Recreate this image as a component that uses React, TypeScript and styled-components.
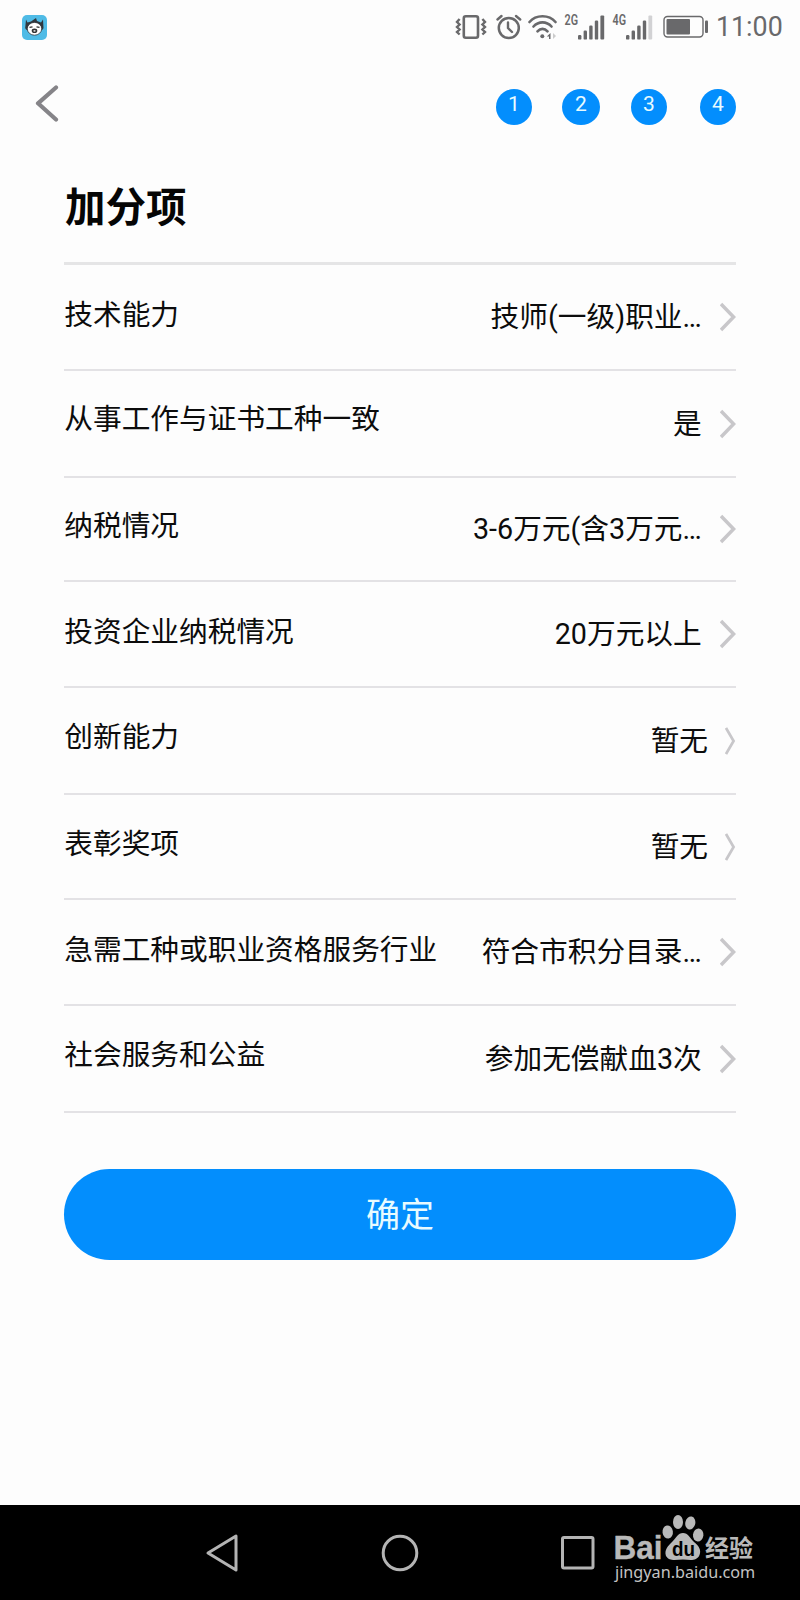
import React from 'react';
import styled, { createGlobalStyle } from 'styled-components';

const GlobalStyle = createGlobalStyle`
  * { box-sizing: border-box; }
  body {
    margin: 0;
    background: #fdfdfd;
    color: #0c0c0c;
    font-family: Roboto, 'Noto Sans CJK SC', sans-serif;
  }
`;

const Screen = styled.div`
  width: 800px;
  height: 1600px;
  display: flex;
  flex-direction: column;
  overflow: hidden;
`;

const StatusBar = styled.header`
  height: 54px;
  flex: none;
  display: flex;
  align-items: center;
  justify-content: space-between;
  padding: 0 18px 0 22px;
  color: #69696b;
`;

const StatusIcons = styled.div`
  display: flex;
  align-items: center;
`;

const Glyph = styled.svg<{ $gap?: number }>`
  display: block;
  flex: none;
  margin-right: ${(p) => p.$gap ?? 0}px;
`;

const Clock = styled.span`
  font-size: 26.8px;
  line-height: 32px;
  width: 66px;
  white-space: nowrap;
`;

const NavRow = styled.div`
  height: 106px;
  flex: none;
  display: flex;
  justify-content: space-between;
  padding: 31px 64px 0 35px;
`;

const Steps = styled.div`
  display: flex;
  padding-top: 4px;
`;

const Step = styled.span<{ $width: number; $gap: number }>`
  width: ${(p) => p.$width}px;
  height: 36px;
  margin-right: ${(p) => p.$gap}px;
  border-radius: 50%;
  background: #038efd;
  color: #e8fbff;
  font-size: 21px;
  line-height: 31px;
  text-align: center;
`;

const Content = styled.main`
  flex: 1;
  padding: 0 64px;
`;

const Title = styled.h1`
  margin: 0;
  height: 102px;
  padding: 19px 0 0 1px;
  font-size: 40.5px;
  line-height: 58px;
  font-weight: 700;
  color: #050505;
`;

const List = styled.ul`
  list-style: none;
  margin: 0;
  padding: 0;
  border-top: 3px solid #e5e5e6;
`;

const Row = styled.li<{ $height: number }>`
  height: ${(p) => p.$height}px;
  border-bottom: 2px solid #e3e2e5;
  display: flex;
  align-items: center;
  font-size: 28.7px;
  line-height: 42px;
  white-space: nowrap;
`;

const Label = styled.span<{ $lift: number }>`
  flex: 1;
  padding: 0 0 ${(p) => p.$lift}px 0.3px;
`;

const Value = styled.span<{ $gap: number }>`
  margin-right: ${(p) => p.$gap}px;
`;

const Confirm = styled.button`
  display: block;
  width: 672px;
  height: 91px;
  margin: 56px 0 0;
  padding: 1px 0 0;
  border: 0;
  border-radius: 46px;
  background: #038efd;
  color: #e8fbff;
  font: 400 34px/50px Roboto, 'Noto Sans CJK SC', sans-serif;
`;

const SystemBar = styled.footer`
  position: relative;
  height: 95px;
  flex: none;
  background: #000;
  display: flex;
  align-items: center;
  padding-left: 205px;
`;

const Watermark = styled.div`
  position: absolute;
  left: 610px;
  top: 6px;
  width: 150px;
  color: #b9b9b9;
`;

const Site = styled.div`
  font: 400 16.2px/20px 'Noto Sans', sans-serif;
  color: #c4c4c4;
  padding-left: 5px;
  margin-top: -9px;
  white-space: nowrap;
`;

const steps = [
  { n: 1, width: 36, gap: 30 },
  { n: 2, width: 38, gap: 31 },
  { n: 3, width: 36, gap: 33 },
  { n: 4, width: 36, gap: 0 },
];

const rows = [
  { label: '技术能力', value: '技师(一级)职业…', height: 106, lift: 5 },
  { label: '从事工作与证书工种一致', value: '是', height: 107, lift: 9 },
  { label: '纳税情况', value: '3-6万元(含3万元…', height: 104, lift: 7 },
  { label: '投资企业纳税情况', value: '20万元以上', height: 106, lift: 4 },
  { label: '创新能力', value: '暂无', height: 107, lift: 7, narrow: true },
  { label: '表彰奖项', value: '暂无', height: 105, lift: 6, narrow: true },
  { label: '急需工种或职业资格服务行业', value: '符合市积分目录…', height: 106, lift: 5 },
  { label: '社会服务和公益', value: '参加无偿献血3次', height: 107, lift: 7 },
];

const AppBadge = () => (
  <Glyph width="25" height="25" viewBox="0 0 25 25">
    <rect width="25" height="25" rx="5" fill="#4fbbe6" />
    <path d="M4 4.5 L5.5 7.5 L9 6.5 L14 3 L15 6 L19 7.5 L21 4.5 L21.5 13 C20 18 5 18 3.2 13Z" fill="#30373d" />
    <ellipse cx="12.5" cy="13.8" rx="7.2" ry="6.4" fill="#fff" stroke="#30373d" strokeWidth=".8" />
    <path d="M7.5 12.4 L10.5 11.8 M14.5 11.8 L17.5 12.4" stroke="#333" strokeWidth="1.2" />
    <ellipse cx="12.5" cy="15.7" rx="2.8" ry="2.3" fill="#333" />
    <ellipse cx="12.5" cy="15.9" rx="1.2" ry=".8" fill="#ddd" />
  </Glyph>
);

const Vibrate = () => (
  <Glyph width="32" height="26" viewBox="0 0 32 26" $gap={9} fill="none" stroke="currentColor">
    <rect x="8.8" y="2.3" width="14.2" height="21.4" rx="2" strokeWidth="2.6" />
    <path d="M4.6 5 L2 8 L4.6 10.5 L2 13 L4.6 15.5 L2 18 L4.6 20.5 M27.4 5 L30 8 L27.4 10.5 L30 13 L27.4 15.5 L30 18 L27.4 20.5" strokeWidth="2.4" />
  </Glyph>
);

const Alarm = () => (
  <Glyph width="26" height="26" viewBox="0 0 26 26" $gap={6} fill="none" stroke="currentColor" strokeLinecap="round">
    <circle cx="12.8" cy="14" r="10" strokeWidth="2.5" />
    <path d="M12 8.5 V14 L16 18" strokeWidth="2.4" />
    <path d="M1.5 5.5 L5.5 2 M20 2 L24.2 5.5" strokeWidth="2.4" />
  </Glyph>
);

const Wifi = () => (
  <Glyph width="30" height="26" viewBox="0 0 30 26" $gap={6} fill="none" stroke="currentColor" strokeWidth="2.6" strokeLinecap="round">
    <path d="M1.5 8 C8 .4 21 .4 27.5 8 M5.5 12.5 C10.5 7 18.5 7 23.5 12.5 M9.5 17.3 C12.5 14 16.5 14 19.5 17.3" />
    <circle cx="14.3" cy="22.3" r="2" fill="currentColor" stroke="none" />
    <path d="M22.5 19 V25 H21 V22.5 H18.8Z" fill="currentColor" stroke="none" />
    <path d="M25 19 L28 22 L25 25Z" fill="#ccc" stroke="none" />
  </Glyph>
);

const Signal = ({ network, weak, gap }: { network: string; weak?: boolean; gap: number }) => (
  <Glyph width="41" height="28" viewBox="0 -1 41 28" $gap={gap} fill="currentColor">
    <text x="0.5" y="11" fontSize="15" fontWeight="600" textLength="13.5" lengthAdjust="spacingAndGlyphs">
      {network}
    </text>
    <rect x="14" y="21" width="3.4" height="4.6" rx="1.2" />
    <rect x="19.6" y="16.5" width="3.4" height="9.1" rx="1.2" />
    <rect x="25.2" y="11.5" width="3.4" height="14.1" rx="1.2" />
    <rect x="30.8" y="6.5" width="3.4" height="19.1" rx="1.2" />
    <rect x="36.4" y="1.5" width="3.8" height="24.1" rx="1" fill={weak ? '#d2d2d4' : 'currentColor'} />
  </Glyph>
);

const Battery = () => (
  <Glyph width="46" height="24" viewBox="0 0 46 24" $gap={7}>
    <rect x="1" y="1.5" width="39" height="20.5" rx="3.5" fill="none" stroke="currentColor" strokeWidth="1.4" />
    <rect x="3.5" y="4" width="23.5" height="15.5" rx="1" fill="currentColor" />
    <rect x="42" y="5.5" width="3" height="12.5" rx="1" fill="currentColor" />
  </Glyph>
);

const Back = () => (
  <Glyph width="24" height="38" viewBox="0 0 24 38" fill="none" stroke="#858488" strokeWidth="4.2" strokeLinecap="round" strokeLinejoin="round">
    <path d="M21 2.5 L3 18.3 L21 34.5" />
  </Glyph>
);

const Chevron = ({ narrow }: { narrow?: boolean }) => {
  const width = narrow ? 11 : 16;
  return (
    <Glyph width={width} height="30" viewBox={`0 0 ${width} 30`} fill="none" stroke="#c8c7ca" strokeWidth={narrow ? 2.7 : 3.5}>
      <path d={`M1 2 L${width - 2.4} 15 L1 28`} />
    </Glyph>
  );
};

const SystemIcons = () => (
  <>
    <Glyph width="34" height="40" viewBox="0 0 34 40" $gap={141} fill="none" stroke="#b4b4b4" strokeWidth="3" strokeLinejoin="round">
      <path d="M31 3 V37 L3 20Z" />
    </Glyph>
    <Glyph width="40" height="40" viewBox="0 0 40 40" $gap={140} fill="none" stroke="#b4b4b4" strokeWidth="3">
      <circle cx="20" cy="20" r="16.8" />
    </Glyph>
    <Glyph width="36" height="36" viewBox="0 0 36 36" fill="none" stroke="#b4b4b4" strokeWidth="3">
      <rect x="2.5" y="2.5" width="30.5" height="30.5" rx="1.5" />
    </Glyph>
  </>
);

const PawLogo = () => (
  <Glyph width="150" height="60" viewBox="0 0 150 60" fill="currentColor">
    <text x="3.5" y="47.5" fontFamily="Liberation Sans, sans-serif" fontWeight="700" fontSize="33" textLength="49" lengthAdjust="spacingAndGlyphs" stroke="currentColor" strokeWidth=".4">
      Bai
    </text>
    <ellipse cx="57.7" cy="21" rx="5.2" ry="6.6" transform="rotate(-8 57.7 21)" />
    <ellipse cx="68" cy="11" rx="5" ry="7" />
    <ellipse cx="80.3" cy="12" rx="5" ry="6.6" transform="rotate(12 80.3 12)" />
    <ellipse cx="88.2" cy="24" rx="5.2" ry="6.6" transform="rotate(6 88.2 24)" />
    <path d="M73 22 C78 22 80 27 84 31 C89 35 91.5 39 89.5 44 C86.5 51 79 48.5 73 48.5 C67 48.5 59.5 51 56 45 C54 39 58 35 62 31 C66 27 68 22 73 22Z" />
    <text x="62" y="44.5" fontFamily="Liberation Sans, sans-serif" fontWeight="700" fontSize="21" fill="#000" textLength="23" lengthAdjust="spacingAndGlyphs">
      du
    </text>
    <text x="95" y="46" fontFamily="'Noto Sans CJK SC', sans-serif" fontWeight="700" fontSize="24" textLength="48" lengthAdjust="spacingAndGlyphs">
      经验
    </text>
  </Glyph>
);

export default function App() {
  return (
    <Screen>
      <GlobalStyle />
      <StatusBar>
        <AppBadge />
        <StatusIcons>
          <Vibrate />
          <Alarm />
          <Wifi />
          <Signal network="2G" gap={7} />
          <Signal network="4G" weak gap={10} />
          <Battery />
          <Clock>11:00</Clock>
        </StatusIcons>
      </StatusBar>
      <NavRow>
        <Back />
        <Steps>
          {steps.map((s) => (
            <Step key={s.n} $width={s.width} $gap={s.gap}>{s.n}</Step>
          ))}
        </Steps>
      </NavRow>
      <Content>
        <Title>加分项</Title>
        <List>
          {rows.map((r) => (
            <Row key={r.label} $height={r.height}>
              <Label $lift={r.lift}>{r.label}</Label>
              <Value $gap={r.narrow ? 17 : 18.3}>{r.value}</Value>
              <Chevron narrow={r.narrow} />
            </Row>
          ))}
        </List>
        <Confirm>确定</Confirm>
      </Content>
      <SystemBar>
        <SystemIcons />
        <Watermark>
          <PawLogo />
          <Site>jingyan.baidu.com</Site>
        </Watermark>
      </SystemBar>
    </Screen>
  );
}
